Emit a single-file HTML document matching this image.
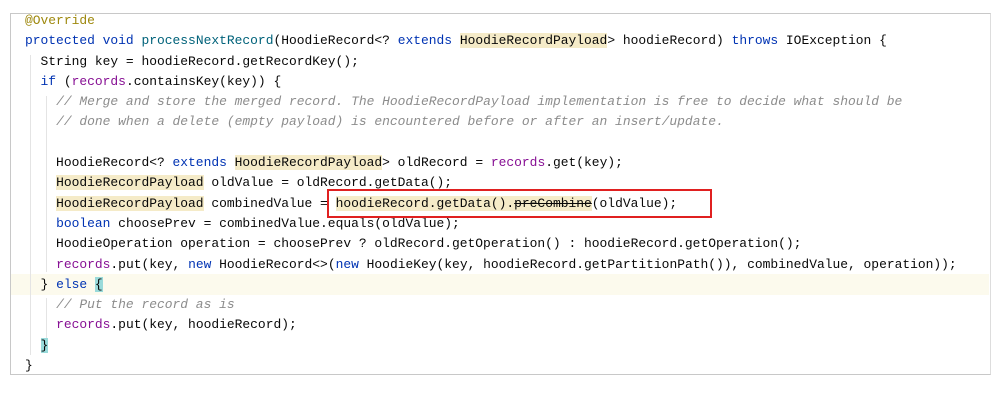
<!DOCTYPE html>
<html><head><style>
body{margin:0;background:#fff;width:1000px;height:401px;overflow:hidden;position:relative}
.box{position:absolute;left:10px;top:13px;width:979px;height:360px;border:1px solid #c8c8c8;border-right-color:#ddd}
.code{position:absolute;left:25px;top:11px;font-family:"Liberation Mono",monospace;font-size:12.95px;line-height:20.3px;color:#080808;white-space:pre}
.k{color:#0033b3}.p{color:#871094}.c{color:#8c8c8c;font-style:italic}.a{color:#9e880d}
.h{background:#f5ebc8}.b{background:#99dada}.s{text-decoration:line-through}
.cur{position:absolute;left:11px;top:274px;width:978px;height:21px;background:#fcfaed}
.g{position:absolute;width:1px;background:#e4e4e4}
.red{position:absolute;left:327px;top:189px;width:381px;height:25px;border:2px solid #e02020}
</style></head><body>
<div class="box"></div>
<div class="cur"></div>
<div class="g" style="left:30px;top:55px;height:300px"></div>
<div class="g" style="left:46px;top:96px;height:176px"></div>
<div class="g" style="left:46px;top:298px;height:40px"></div>
<div class="code"><span class="a">@Override</span>
<span class="k">protected void</span> <span style="color:#00627a">processNextRecord</span>(HoodieRecord&lt;? <span class="k">extends</span> <span class="h">HoodieRecordPayload</span>&gt; hoodieRecord) <span class="k">throws</span> IOException {
  String key = hoodieRecord.getRecordKey();
  <span class="k">if</span> (<span class="p">records</span>.containsKey(key)) {
    <span class="c">// Merge and store the merged record. The HoodieRecordPayload implementation is free to decide what should be</span>
    <span class="c">// done when a delete (empty payload) is encountered before or after an insert/update.</span>

    HoodieRecord&lt;? <span class="k">extends</span> <span class="h">HoodieRecordPayload</span>&gt; oldRecord = <span class="p">records</span>.get(key);
    <span class="h">HoodieRecordPayload</span> oldValue = oldRecord.getData();
    <span class="h">HoodieRecordPayload</span> combinedValue = <span class="h">hoodieRecord.getData().<span class="s">preCombine</span></span>(oldValue);
    <span class="k">boolean</span> choosePrev = combinedValue.equals(oldValue);
    HoodieOperation operation = choosePrev ? oldRecord.getOperation() : hoodieRecord.getOperation();
    <span class="p">records</span>.put(key, <span class="k">new</span> HoodieRecord&lt;&gt;(<span class="k">new</span> HoodieKey(key, hoodieRecord.getPartitionPath()), combinedValue, operation));
  } <span class="k">else</span> <span class="b">{</span>
    <span class="c">// Put the record as is</span>
    <span class="p">records</span>.put(key, hoodieRecord);
  <span class="b">}</span>
}</div>
<div class="red"></div>
</body></html>
